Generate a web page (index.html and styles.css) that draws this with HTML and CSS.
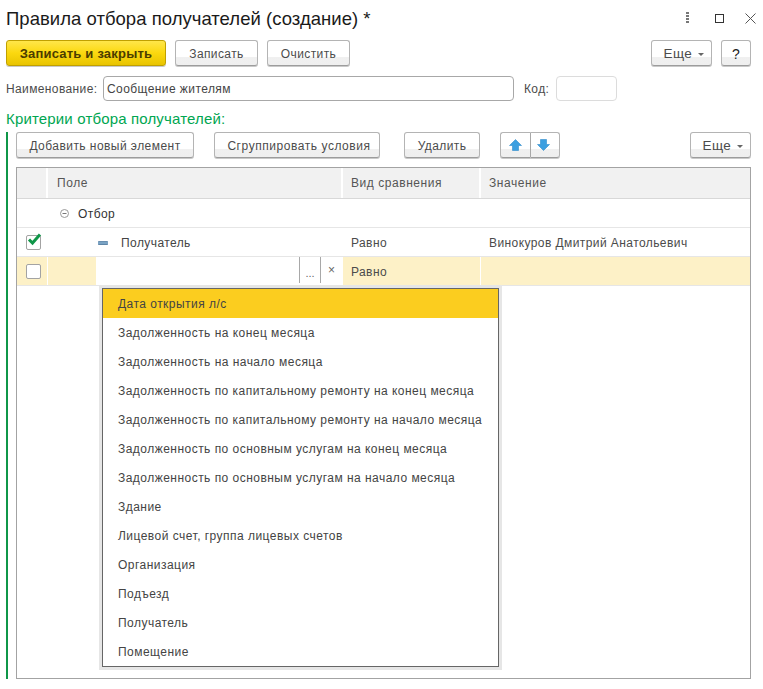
FILE: index.html
```html
<!DOCTYPE html>
<html lang="ru">
<head>
<meta charset="utf-8">
<title>Правила отбора получателей</title>
<link rel="stylesheet" href="styles.css">
</head>
<body>
<div class="window">
  <header class="titlebar">
    <h1 class="title">Правила отбора получателей (создание) *</h1>
    <div class="winctl">
      <svg class="ic-dots" width="4" height="12" viewBox="0 0 4 12"><g fill="#777"><rect x="0" y="0" width="3" height="2"/><rect x="0" y="3" width="3" height="2"/><rect x="0" y="6" width="3" height="2"/><rect x="0" y="9" width="3" height="2"/></g></svg>
      <svg class="ic-max" width="9" height="9" viewBox="0 0 9 9"><rect x="0.5" y="0.5" width="8" height="8" fill="none" stroke="#333"/></svg>
      <svg class="ic-close" width="11" height="11" viewBox="0 0 11 11"><path d="M0.5 0.5L10.5 10.5M10.5 0.5L0.5 10.5" stroke="#555" fill="none"/></svg>
    </div>
  </header>
  <div class="cmdbar">
    <button class="btn btn-primary w-save-close">Записать и закрыть</button>
    <button class="btn w-save">Записать</button>
    <button class="btn w-save">Очистить</button>
    <div class="spacer"></div>
    <button class="btn w-more">Еще <span class="caret"></span></button>
    <button class="btn w-help">?</button>
  </div>
  <div class="fields">
    <label class="lbl lbl-name">Наименование:</label>
    <div class="input input-name">Сообщение жителям</div>
    <label class="lbl lbl-code">Код:</label>
    <div class="input input-code"></div>
  </div>
  <h2 class="group-title">Критерии отбора получателей:</h2>
  <section class="group">
    <div class="toolbar">
      <button class="btn w-add">Добавить новый элемент</button>
      <button class="btn w-group">Сгруппировать условия</button>
      <button class="btn w-del">Удалить</button>
      <div class="btn-pair">
        <button class="btn-part"><svg width="13" height="12" viewBox="0 0 13 12"><path d="M6.5 0.5L12.5 6.5H9.5V11.5H3.5V6.5H0.5Z" fill="#3c9fe0" stroke="#2f8ccb" stroke-width="0.6"/></svg></button>
        <button class="btn-part"><svg width="13" height="12" viewBox="0 0 13 12"><path d="M6.5 11.5L12.5 5.5H9.5V0.5H3.5V5.5H0.5Z" fill="#3c9fe0" stroke="#2f8ccb" stroke-width="0.6"/></svg></button>
      </div>
      <div class="spacer"></div>
      <button class="btn w-more">Еще <span class="caret"></span></button>
    </div>
    <div class="table">
      <div class="row head">
        <div class="c c1"></div>
        <div class="c c2">Поле</div>
        <div class="c c3">Вид сравнения</div>
        <div class="c c4">Значение</div>
      </div>
      <div class="row r-group">
        <div class="c c1"></div>
        <div class="c c2 indent1"><svg class="ic-minus" width="9" height="9" viewBox="0 0 9 9"><circle cx="4.5" cy="4.5" r="4" fill="none" stroke="#999"/><path d="M2.5 4.5H6.5" stroke="#777"/></svg>Отбор</div>
        <div class="c c3"></div>
        <div class="c c4"></div>
      </div>
      <div class="row r-item">
        <div class="c c1"><span class="check"><svg class="tick" width="15" height="13" viewBox="0 0 15 13"><path d="M2 6.5L5.5 10L13 1.5" fill="none" stroke="#0f9648" stroke-width="3"/></svg></span></div>
        <div class="c c2 indent2"><span class="ic-dash"></span>Получатель</div>
        <div class="c c3">Равно</div>
        <div class="c c4">Винокуров Дмитрий Анатольевич</div>
      </div>
      <div class="row r-edit">
        <div class="c c1"><span class="check"></span></div>
        <div class="c c2 edit-cell">
          <div class="edit-pad"></div>
          <div class="edit-box">
            <div class="edit-text"></div>
            <div class="edit-btn">...</div>
            <div class="edit-btn edit-x">×</div>
          </div>
        </div>
        <div class="c c3">Равно</div>
        <div class="c c4"></div>
      </div>
      <ul class="popup">
        <li class="sel">Дата открытия л/с</li>
        <li>Задолженность на конец месяца</li>
        <li>Задолженность на начало месяца</li>
        <li>Задолженность по капитальному ремонту на конец месяца</li>
        <li>Задолженность по капитальному ремонту на начало месяца</li>
        <li>Задолженность по основным услугам на конец месяца</li>
        <li>Задолженность по основным услугам на начало месяца</li>
        <li>Здание</li>
        <li>Лицевой счет, группа лицевых счетов</li>
        <li>Организация</li>
        <li>Подъезд</li>
        <li>Получатель</li>
        <li>Помещение</li>
      </ul>
    </div>
  </section>
</div>
</body>
</html>
```
FILE: styles.css
```css
* { box-sizing: border-box; }
html, body { margin: 0; padding: 0; background: #fff; }
body { font-family: "Liberation Sans", Arial, sans-serif; font-size: 12px; color: #4b4b4b; }
.window { width: 763px; height: 689px; padding: 0 12px 0 6px; overflow: hidden; }

.titlebar { height: 40px; display: flex; align-items: flex-start; }
.title { margin: 8px 0 0; font-size: 18.5px; line-height: 21px; font-weight: 400; letter-spacing: 0.03px; color: #1a1a1a; flex: 1; }
.winctl { display: flex; align-items: center; height: 12px; margin-top: 12px; margin-right: -5px; }
.ic-dots { margin-right: 25px; }
.ic-max { margin-right: 21px; }

.cmdbar, .toolbar { display: flex; height: 26px; }
.spacer { flex: 1; }

.btn, .btn-part {
  font-family: inherit; font-size: 12px; color: #4b4b4b; height: 26px; padding: 1px 0 0;
  background: linear-gradient(#fff 0, #fff 65%, #f0f0f0 66%, #efefef 100%);
  border: 1px solid #b4b4b4; border-bottom-color: #9c9c9c; border-radius: 3px;
  box-shadow: 0 1px 0 #c9c9c9;
  letter-spacing: 0.4px;
}
.btn-primary {
  background: linear-gradient(#ffe64a 0, #fbd80f 50%, #e9c400 100%);
  border-color: #c0a000; color: #4b3c00; font-size: 13px; font-weight: 700; letter-spacing: 0.2px;
}
.w-save-close { width: 160px; margin-right: 9px; }
.w-save { width: 83px; margin-right: 9px; }
.w-more { width: 61px; font-size: 13.5px; padding-left: 5px; }
.w-help { width: 30px; margin-left: 9px; font-size: 14px; color: #222; }
.caret { display: inline-block; width: 0; height: 0; margin-left: 2px; vertical-align: 2px; border-left: 3px solid transparent; border-right: 3px solid transparent; border-top: 3px solid #666; }

.fields { display: flex; align-items: center; height: 25px; margin-top: 10px; }
.lbl { color: #4b4b4b; letter-spacing: 0.38px; padding-top: 1px; }
.lbl-name { width: 97px; }
.lbl-code { width: 32px; margin-left: 10px; }
.input { height: 25px; border: 1px solid #a8a8a8; border-radius: 4px; padding: 1px 0 0 3px; line-height: 23px; letter-spacing: 0.42px; color: #444; }
.input-name { width: 411px; }
.input-code { width: 61px; border-color: #dcdcdc; }

.group-title { margin: 9px 0 0; height: 22px; font-size: 15px; line-height: 18px; font-weight: 400; letter-spacing: 0.16px; color: #00a651; }
.group { height: 547px; border-left: 2px solid #0f9648; padding-left: 8px; }
.w-add { width: 178px; margin-right: 20px; letter-spacing: 0.45px; }
.w-group { width: 166px; margin-right: 24px; padding-left: 4px; letter-spacing: 0.55px; }
.w-del { width: 76px; margin-right: 20px; }
.btn-pair { display: flex; }
.btn-part { width: 30px; display: flex; align-items: center; justify-content: center; border-radius: 3px 0 0 3px; border-right: 0; padding: 0 1px 0 0; }
.btn-part + .btn-part { border-left: 1px solid #a8a8a8; border-right: 1px solid #b4b4b4; border-radius: 0 3px 3px 0; padding: 0 4px 0 0; }
.btn-part svg { margin-top: -1px; }

.table { position: relative; height: 512px; margin-top: 9px; border: 1px solid #a3a3a3; }
.row { display: flex; height: 29px; border-bottom: 1px solid #e6e6e6; }
.row.head { height: 31px; background: #f1f1f1; border-bottom: 1px solid #d8d8d8; color: #555; }
.row.r-edit { background: #fdf1c7; }
.c { display: flex; align-items: center; padding: 1px 0 0 8px; letter-spacing: 0.42px; white-space: nowrap; }
.c1 { width: 31px; padding: 0 0 0 9px; }
.c2 { width: 295px; }
.c3 { width: 138px; }
.c4 { flex: 1; }
.head .c { border-right: 2px solid #fff; letter-spacing: 0.55px; padding-top: 0; }
.head .c4 { border-right: 0; }
.head .c2 { padding-left: 9px; }
.r-edit .c1, .r-edit .c2, .r-edit .c3 { border-right: 1px solid #fff; }
.indent1 { padding-left: 12px; color: #333; }
.ic-minus { margin-right: 9px; }
.indent2 { padding-left: 50px; color: #444; }
.ic-dash { display: block; width: 10px; height: 4px; margin-right: 13px; border-radius: 1px; background: #7aa3c4; border-top: 1px solid #6a8fb0; border-bottom: 1px solid #5f86a8; }
.check { position: relative; display: block; width: 15px; height: 15px; background: #fff; border: 1px solid #a3a3a3; border-radius: 2px; }
.tick { position: absolute; left: 0; top: -3px; }
.edit-cell { padding: 0; }
.edit-pad { width: 48px; height: 100%; }
.edit-box { flex: 1; height: 100%; display: flex; background: #fff; }
.edit-text { flex: 1; }
.edit-btn { width: 21px; border-left: 1px solid #a8a8a8; text-align: center; line-height: 32px; letter-spacing: 0; font-size: 11px; color: #666; height: 26px; }
.edit-x { width: 22px; line-height: 27px; font-size: 12px; }

.popup {
  position: absolute; left: 85px; top: 120px; width: 397px; height: 379px;
  margin: 0; padding: 0; list-style: none; background: #fff;
  border: 1px solid #666; box-shadow: 0 0 0 3px #e6e6e6;
}
.popup li { height: 29px; padding-left: 15px; line-height: 30px; letter-spacing: 0.47px; color: #444; white-space: nowrap; }
.popup li.sel { background: #fbcd1f; }
```
